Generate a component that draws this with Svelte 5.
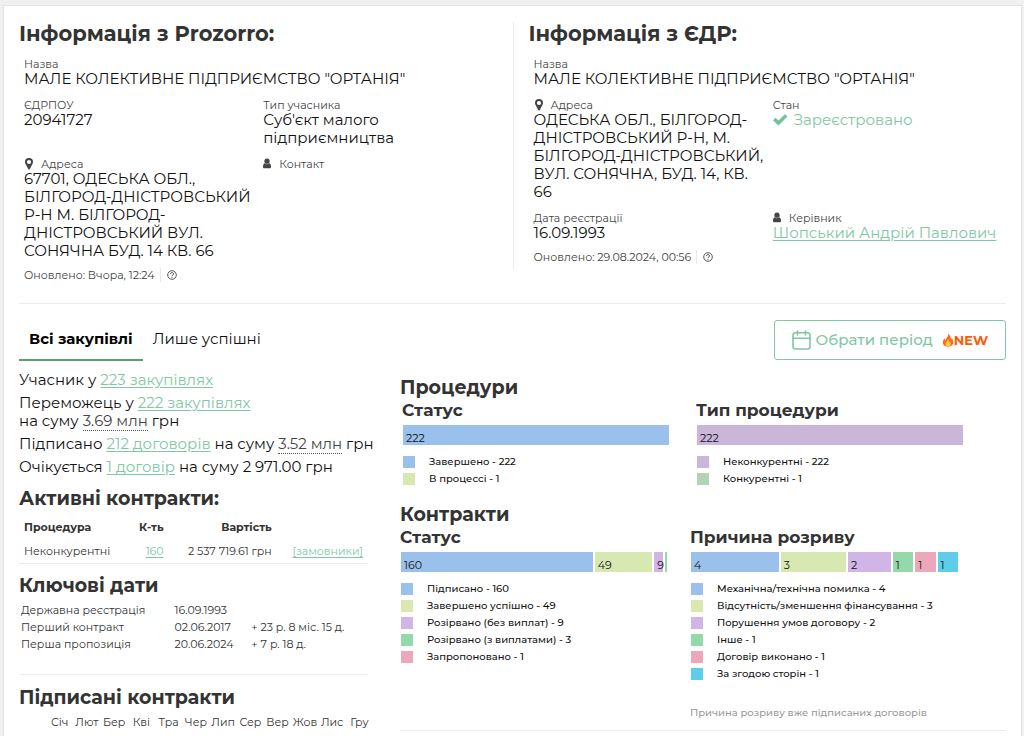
<script lang="ts">
  interface Item {
    label: string;
    value: number;
    color: string;
  }

  const blue = '#99c1ec';
  const lime = '#d7e9b1';
  const violet = '#d0b5e6';
  const green = '#95d8aa';
  const pink = '#eca8ba';

  const procedureStatus: Item[] = [
    { label: 'Завершено', value: 222, color: blue },
    { label: 'В процессі', value: 1, color: lime }
  ];

  const procedureType: Item[] = [
    { label: 'Неконкурентні', value: 222, color: '#c9b6d9' },
    { label: 'Конкурентні', value: 1, color: '#b4d2b4' }
  ];

  const contractStatus: Item[] = [
    { label: 'Підписано', value: 160, color: blue },
    { label: 'Завершено успішно', value: 49, color: lime },
    { label: 'Розірвано (без виплат)', value: 9, color: violet },
    { label: 'Розірвано (з виплатами)', value: 3, color: green },
    { label: 'Запропоновано', value: 1, color: pink }
  ];

  const breakReason: Item[] = [
    { label: 'Механічна/технічна помилка', value: 4, color: blue },
    { label: 'Відсутність/зменшення фінансування', value: 3, color: lime },
    { label: 'Порушення умов договору', value: 2, color: violet },
    { label: 'Інше', value: 1, color: green },
    { label: 'Договір виконано', value: 1, color: pink },
    { label: 'За згодою сторін', value: 1, color: '#5dcde9' }
  ];

  const dates = [
    ['Державна реєстрація', '16.09.1993', ''],
    ['Перший контракт', '02.06.2017', '+ 23 р. 8 міс. 15 д.'],
    ['Перша пропозиція', '20.06.2024', '+ 7 р. 18 д.']
  ];

  const months = ['Січ', 'Лют', 'Бер', 'Кві', 'Тра', 'Чер', 'Лип', 'Сер', 'Вер', 'Жов', 'Лис', 'Гру'];

  let tab = $state('all');

  // share of the whole bar, in percent
  function share(items: Item[], item: Item) {
    const total = items.reduce((sum, i) => sum + i.value, 0);
    return (item.value / total) * 100;
  }
</script>

{#snippet pin()}
  <svg width="10" height="12" viewBox="0 0 10 12">
    <path fill="#444" fill-rule="evenodd" d="M5 0a4 4 0 0 0-4 4c0 1 .3 1.600.7 2.300L4.200 11c.3.7 1.300.7 1.600 0l2.500-4.700C8.700 5.600 9 5 9 4a4 4 0 0 0-4-4zm0 1.900a2.100 2.100 0 1 1 0 4.200 2.100 2.100 0 0 1 0-4.200z" />
  </svg>
{/snippet}

{#snippet person()}
  <svg width="9" height="12" viewBox="0 0 9 12">
    <circle cx="4" cy="3.200" r="2.600" fill="#444" />
    <path fill="#444" d="M1.800 5.200C.5 5.500 0 7 0 8.700 0 9.700.6 10.200 1.300 10.200h5.400C7.400 10.200 8 9.700 8 8.700 8 7 7.500 5.500 6.200 5.200 5 6.500 3 6.500 1.800 5.200z" />
  </svg>
{/snippet}

{#snippet help()}
  <svg width="10" height="10" viewBox="0 0 10 10" fill="none" stroke="#444">
    <circle cx="5" cy="5" r="4.300" stroke-width="0.900" />
    <path d="M3.500 4.100C3.500 2 6.600 2.200 6.500 4 6.400 5 5 5 5 6.200M5 6.900v.9" stroke-width="1" />
  </svg>
{/snippet}

{#snippet chart(title: string, items: Item[])}
  <div class="chart">
    <h3>{title}</h3>
    <div class="bar">
      {#each items as item}
        {#if share(items, item) > 1}
          <span class="segment" style="width: {share(items, item)}%; background-color: {item.color}">
            {share(items, item) > 3 ? item.value : ''}
          </span>
        {/if}
      {/each}
    </div>
    <ul>
      {#each items as item}
        <li><i style="background: {item.color}"></i>{item.label} - {item.value}</li>
      {/each}
    </ul>
  </div>
{/snippet}

<main>
  <div class="info">
    <section>
      <h1>Інформація з Prozorro:</h1>
      <dl>
        <div class="wide">
          <dt>Назва</dt>
          <dd>МАЛЕ КОЛЕКТИВНЕ ПІДПРИЄМСТВО "ОРТАНІЯ"</dd>
        </div>
        <div>
          <dt>ЄДРПОУ</dt>
          <dd>20941727</dd>
        </div>
        <div>
          <dt>Тип учасника</dt>
          <dd>Суб'єкт малого<br />підприємництва</dd>
        </div>
        <div>
          <dt>{@render pin()}Адреса</dt>
          <dd>67701, ОДЕСЬКА ОБЛ.,<br />БІЛГОРОД-ДНІСТРОВСЬКИЙ<br />Р-Н М. БІЛГОРОД-<br />ДНІСТРОВСЬКИЙ ВУЛ.<br />СОНЯЧНА БУД. 14 КВ. 66</dd>
        </div>
        <div>
          <dt>{@render person()}Контакт</dt>
        </div>
      </dl>
      <p class="updated"><span>Оновлено: Вчора, 12:24</span>{@render help()}</p>
    </section>

    <section class="edr">
      <h1>Інформація з ЄДР:</h1>
      <dl>
        <div class="wide">
          <dt>Назва</dt>
          <dd>МАЛЕ КОЛЕКТИВНЕ ПІДПРИЄМСТВО "ОРТАНІЯ"</dd>
        </div>
        <div>
          <dt>{@render pin()}Адреса</dt>
          <dd>ОДЕСЬКА ОБЛ., БІЛГОРОД-<br />ДНІСТРОВСЬКИЙ Р-Н, М.<br />БІЛГОРОД-ДНІСТРОВСЬКИЙ,<br />ВУЛ. СОНЯЧНА, БУД. 14, КВ.<br />66</dd>
        </div>
        <div>
          <dt>Стан</dt>
          <dd class="state">
            <svg width="15" height="12" viewBox="0 0 15 12"><path fill="#71c29a" d="M0 6.300 2.500 3.800 5.500 6.600 12 .2 14.400 2.500 5.500 11.600z" /></svg>
            Зареєстровано
          </dd>
        </div>
        <div>
          <dt>Дата реєстрації</dt>
          <dd>16.09.1993</dd>
        </div>
        <div>
          <dt>{@render person()}Керівник</dt>
          <dd><a href="#director">Шопський Андрій Павлович</a></dd>
        </div>
      </dl>
      <p class="updated"><span>Оновлено: 29.08.2024, 00:56</span>{@render help()}</p>
    </section>
  </div>

  <div class="toolbar">
    <div class="tabs">
      <button class:active={tab === 'all'} onclick={() => (tab = 'all')}>Всі закупівлі</button>
      <button class:active={tab === 'success'} onclick={() => (tab = 'success')}>Лише успішні</button>
    </div>
    <button class="period">
      <svg width="19" height="20" viewBox="0 0 19 20" fill="none" stroke="#80c8a4" stroke-width="1.600" stroke-linecap="round">
        <rect x="1" y="2.800" width="17" height="16.200" rx="2.500" />
        <path d="M1 8.300h17M5.500 1v4M13.500 1v4" />
      </svg>
      <span>Обрати період</span>
      <svg width="12" height="14" viewBox="0 0 12 14">
        <path fill="#fb6a1b" d="M6.200.5c.6 2-.6 3-1.600 4.500C3.800 6.200 3.700 7 3.900 7.600 3 7.200 2.800 6.200 2.900 5.200 1.500 6.500.8 8 .8 9.600.8 12 3 13.700 6 13.700s5.300-1.700 5.300-4.400c0-1.700-.9-2.700-1.200-4.300-.6.4-.9.9-1 1.600C8.700 4 8 1.800 6.200.5z" />
        <path fill="#ffc83d" d="M6.300 6c.2 1.700-2.700 2.800-2.700 5 0 1.500 1 2.400 2.500 2.400S8.800 12.500 8.800 11c0-1-.5-1.500-.6-2.300-.4.2-.6.5-.7.9C7.400 8 7.200 6.900 6.300 6z" />
      </svg>
      <b>NEW</b>
    </button>
  </div>

  <div class="content">
    <aside>
      <div class="summary">
        <p>Учасник у <a href="#tenders">223 закупівлях</a></p>
        <p>Переможець у <a href="#won">222 закупівлях</a><br />на суму <span class="sum">3.69 млн</span> грн</p>
        <p>Підписано <a href="#signed">212 договорів</a> на суму <span class="sum">3.52 млн</span> грн</p>
        <p>Очікується <a href="#pending">1 договір</a> на суму 2 971.00 грн</p>
      </div>

      <h2>Активні контракти:</h2>
      <table class="active-contracts">
        <thead>
          <tr><th>Процедура</th><th>К-ть</th><th>Вартість</th><th></th></tr>
        </thead>
        <tbody>
          <tr>
            <td>Неконкурентні</td>
            <td><a href="#contracts">160</a></td>
            <td>2 537 719.61 грн</td>
            <td><a href="#customers">[замовники]</a></td>
          </tr>
        </tbody>
      </table>

      <h2>Ключові дати</h2>
      <table class="dates">
        <tbody>
          {#each dates as [name, date, delta]}
            <tr><td>{name}</td><td>{date}</td><td>{delta}</td></tr>
          {/each}
        </tbody>
      </table>

      <h2>Підписані контракти</h2>
      <div class="months">
        {#each months as month}
          <span>{month}</span>
        {/each}
      </div>
    </aside>

    <div class="charts">
      <h2>Процедури</h2>
      <div class="pair procedures">
        {@render chart('Статус', procedureStatus)}
        {@render chart('Тип процедури', procedureType)}
      </div>

      <h2>Контракти</h2>
      <div class="pair contracts">
        {@render chart('Статус', contractStatus)}
        {@render chart('Причина розриву', breakReason)}
        <p class="note">Причина розриву вже підписаних договорів</p>
      </div>
    </div>
  </div>
</main>

<style>
  :global(body) {
    background: #f0f0f0;
  }

  main {
    box-sizing: border-box;
    min-height: calc(100vh - 5px);
    margin: 5px 2px 0 3px;
    padding: 16px 15px 0;
    border: 1px solid #e2e2e2;
    border-bottom: 0;
    background: #fff;
    color: #111;
    font-family: Montserrat, Inter, sans-serif;
    font-size: 15px;
    line-height: 18px;
  }

  h1,
  h2,
  h3,
  p,
  dl,
  dd,
  ul {
    margin: 0;
    padding: 0;
  }

  h1,
  h2,
  h3 {
    color: #333;
    font-weight: 700;
    line-height: 24px;
  }

  h1 {
    font-size: 21px;
  }

  h2 {
    font-size: 19px;
  }

  h3 {
    font-size: 17px;
    line-height: 20px;
  }

  a {
    color: #80c8a4;
    text-underline-offset: 2px;
  }

  button {
    font: inherit;
    cursor: pointer;
  }

  .info {
    display: grid;
    grid-template-columns: 1fr 1fr;
    align-items: start;
    padding-bottom: 21px;
    border-bottom: 1px solid #ececec;
  }

  .edr {
    padding: 0 0 5px 15px;
    border-left: 1px solid #ececec;
  }

  dl {
    display: grid;
    grid-template-columns: minmax(0, 1fr) minmax(0, 1fr);
    row-gap: 11px;
    padding: 12px 10px 0 5px;
  }

  .edr dl {
    padding-right: 0;
    margin-right: -6px;
  }

  .wide {
    grid-column: 1 / -1;
  }

  dt {
    display: flex;
    align-items: center;
    gap: 7px;
    color: #444;
    font-size: 11px;
    line-height: 12px;
  }

  dd {
    white-space: nowrap;
  }

  .state {
    display: flex;
    align-items: center;
    gap: 6px;
    color: #80c8a4;
  }

  .updated {
    display: flex;
    align-items: center;
    gap: 6px;
    margin-top: 8px;
    padding-left: 5px;
    color: #444;
    font-size: 11px;
    line-height: 14px;
  }

  .updated span {
    padding-right: 5px;
    border-right: 1px solid #e8e8e8;
  }

  .toolbar {
    display: flex;
    align-items: flex-start;
    justify-content: space-between;
    padding-top: 16px;
  }

  .tabs {
    display: flex;
  }

  .tabs button {
    box-sizing: border-box;
    height: 41px;
    padding: 0 10px 2px;
    border: 0;
    border-bottom: 2px solid transparent;
    background: none;
    color: #111;
  }

  .tabs .active {
    border-color: #5ba168;
    color: #000;
    font-weight: 700;
  }

  .period {
    display: flex;
    align-items: center;
    height: 40px;
    padding: 0 17px;
    border: 1px solid #80c8a4;
    border-radius: 3px;
    background: #fff;
    color: #80c8a4;
    font-weight: 500;
  }

  .period span {
    margin: 0 9px 0 5px;
  }

  .period b {
    color: #ff5c0a;
    font-size: 13px;
  }

  .content {
    display: grid;
    grid-template-columns: minmax(0, 349fr) minmax(0, 606fr);
    gap: 32px;
    padding-top: 10px;
  }

  .summary {
    display: grid;
    gap: 5px;
    white-space: nowrap;
  }

  .sum {
    border-bottom: 1px dotted #555;
    color: #444;
  }

  .summary + h2 {
    margin-top: 11px;
  }

  aside table {
    width: 100%;
    border-collapse: collapse;
    color: #333;
    font-size: 11px;
    white-space: nowrap;
  }

  th,
  td {
    padding: 0;
    text-align: left;
  }

  .active-contracts {
    table-layout: fixed;
    margin: 4px 0 10px;
    border-bottom: 1px solid #ececec;
  }

  .active-contracts th,
  .active-contracts td {
    height: 24px;
  }

  .active-contracts th:first-child,
  .active-contracts td:first-child {
    width: 30%;
    padding-left: 5px;
  }

  .active-contracts th:nth-child(2),
  .active-contracts td:nth-child(2) {
    width: 10%;
    text-align: right;
  }

  .active-contracts th:nth-child(3),
  .active-contracts td:nth-child(3) {
    width: 31%;
    text-align: right;
  }

  .active-contracts td:last-child {
    padding-right: 5px;
    text-align: right;
  }

  .dates {
    table-layout: fixed;
    margin-top: 4px;
  }

  .dates td {
    height: 17px;
    line-height: 17px;
  }

  .dates td:first-child {
    width: 44%;
    padding-left: 2px;
  }

  .dates td:nth-child(2) {
    width: 22%;
  }

  .dates + h2 {
    margin-top: 21px;
    padding-top: 11px;
    border-top: 1px solid #ececec;
  }

  .months {
    display: grid;
    grid-template-columns: repeat(12, 1fr);
    margin: 3px -5px 0 27px;
    color: #333;
    font-size: 11px;
    text-align: center;
  }

  .charts {
    padding-top: 5px;
  }

  .pair {
    display: grid;
    grid-template-columns: 1fr 1fr;
    column-gap: 24px;
    padding-right: 40px;
  }

  .procedures {
    margin-bottom: 16px;
    padding-left: 2px;
  }

  .contracts {
    column-gap: 20px;
    padding-right: 46px;
    padding-bottom: 8px;
    border-bottom: 1px solid #ececec;
  }

  .bar {
    display: flex;
    height: 20px;
    margin: 5px 0 8px 1px;
  }

  .segment {
    box-sizing: border-box;
    padding: 4px 0 0 3px;
    border-right: 2px solid #fff;
    font-size: 11px;
    line-height: 18px;
  }

  .segment:empty {
    padding: 0;
  }

  ul {
    margin-left: 1px;
    list-style: none;
  }

  li {
    display: flex;
    align-items: center;
    gap: 14px;
    font-size: 10px;
    font-weight: 500;
    line-height: 17px;
    white-space: nowrap;
  }

  li i {
    width: 12px;
    height: 12px;
  }

  .note {
    grid-column: 2;
    margin-top: 22px;
    color: #999;
    font-size: 10px;
    font-weight: 500;
  }
</style>
